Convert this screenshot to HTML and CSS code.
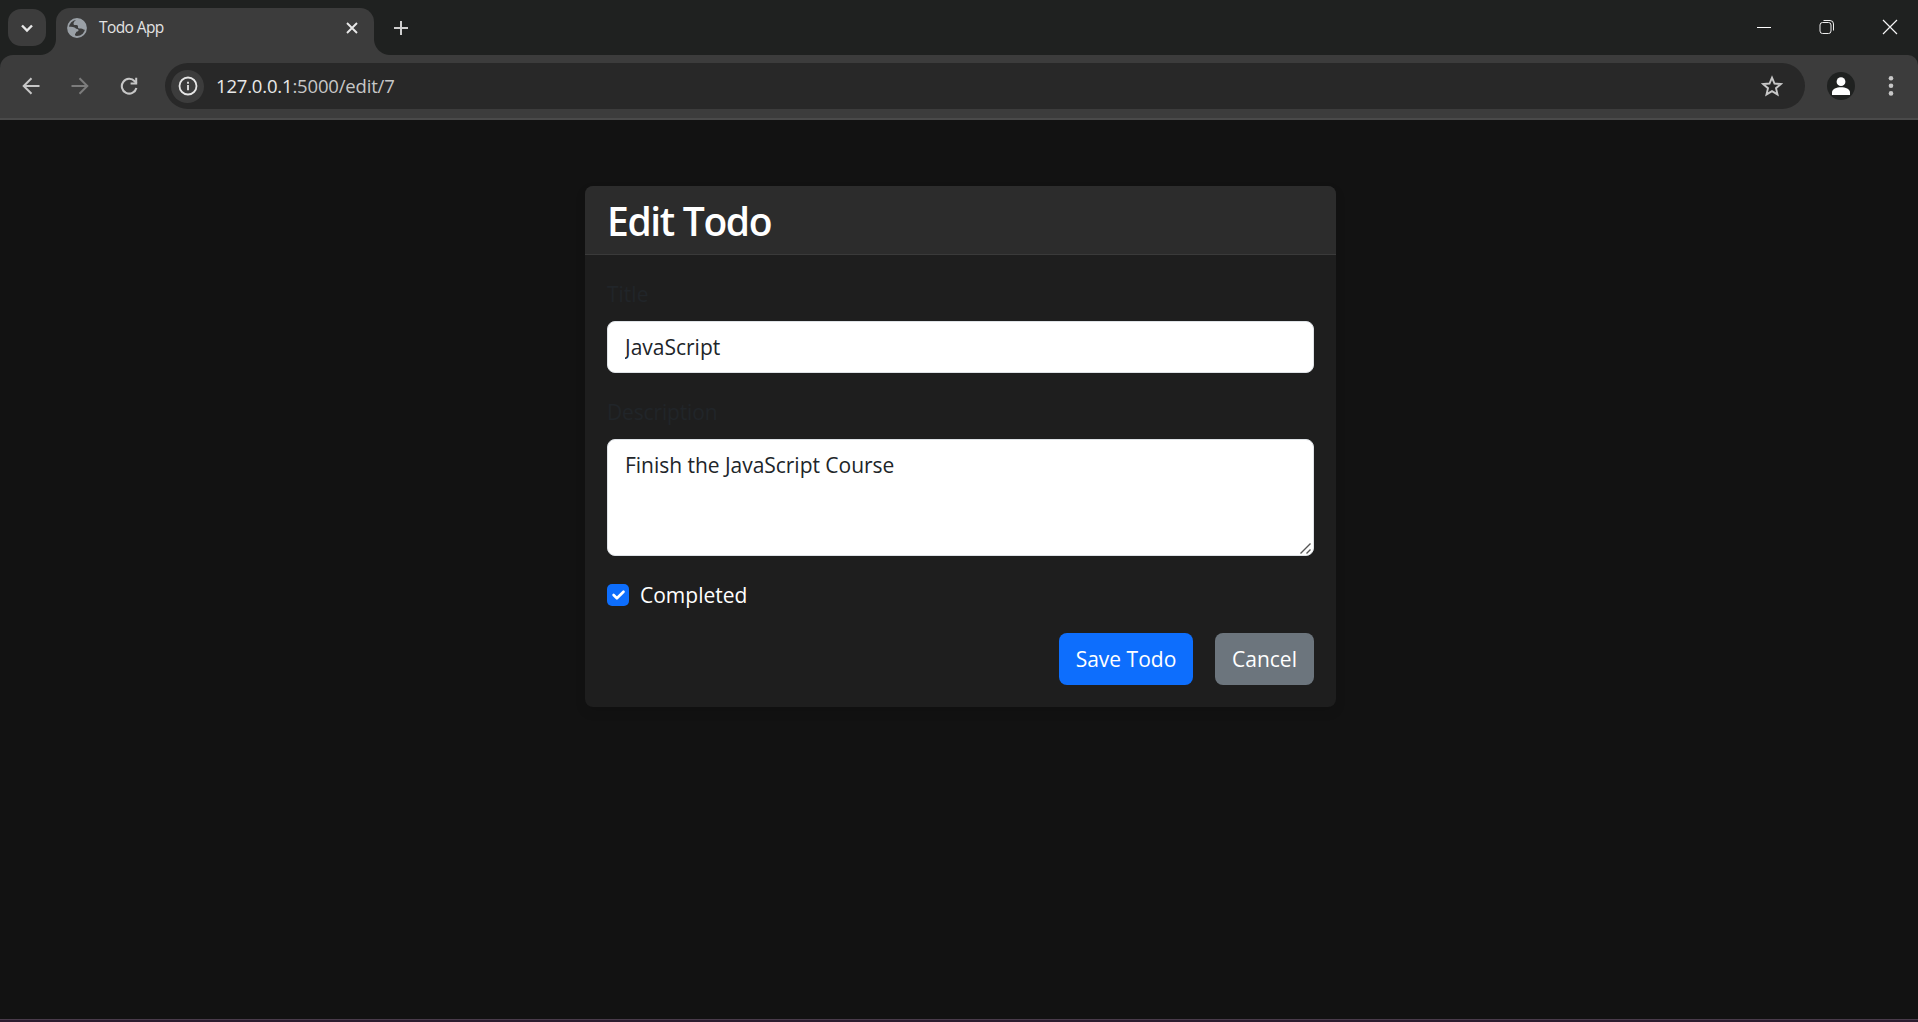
FILE: index.html
```html
<!DOCTYPE html>
<html lang="en">
<head>
<meta charset="utf-8">
<title>Todo App</title>
<link rel="stylesheet" href="styles.css">
</head>
<body>
<header class="browser">
  <div class="tabstrip">
    <div class="tab-search"><svg width="14" height="14" viewBox="0 0 14 14"><path d="M2 4.500l5 5 5-5" fill="none" stroke="#e8e8e8" stroke-width="2.400"/></svg></div>
    <div class="tab">
      <svg class="favicon" width="20" height="20" viewBox="0 0 20 20"><circle cx="10" cy="10" r="9" fill="none" stroke="#9aa0a6" stroke-width="1.800"/><path d="M10.500 1C8.500 2.500 6.500 3.500 6.500 5.500c0 2 1.500 1.500 3 1.500 1.500 0 1.500 1 1.500 2.200 0 1.600 1.500 1.300 3 1.300 2 0 2 1.800 4.800 1C20 6 16 1 10.500 1zM1 9c2.500-.3 5-.3 6.500.5C9 10.200 8.500 11 10.300 11c1.700 0 1.700 2.400 0 2.600C8.800 13.800 9.300 15 8.500 15.500c-1 .6-.5 2 .5 3.300C4 18.500.5 14 1 9z" fill="#9aa0a6"/></svg>
      <span class="tab-title">Todo App</span>
      <svg class="tab-close" width="14" height="14" viewBox="0 0 14 14"><path d="M2 2l10 10M12 2L2 12" stroke="#e8e8e8" stroke-width="1.900"/></svg>
    </div>
    <svg class="new-tab" width="14" height="14" viewBox="0 0 14 14"><path d="M7 0v14M0 7h14" stroke="#cfcfcf" stroke-width="2"/></svg>
    <div class="window-controls">
      <svg width="16" height="16" viewBox="0 0 16 16"><path d="M1 8.500h14" stroke="#fff"/></svg>
      <svg width="16" height="16" viewBox="0 0 16 16" fill="none" stroke="#eee"><rect x="1" y="3.500" width="11" height="11" rx="2.500"/><path d="M4.500 1.500H11a3.500 3.500 0 0 1 3.500 3.500v6.500"/></svg>
      <svg width="16" height="16" viewBox="0 0 16 16"><path d="M1 1l14 14M15 1L1 15" stroke="#f4f4f4" stroke-width="1.200"/></svg>
    </div>
  </div>
  <div class="toolbar">
    <div class="nav-button"><svg width="18" height="18" viewBox="0 0 18 18"><path d="M17.500 9H2M9.500 1.200L1.700 9l7.800 7.800" fill="none" stroke="#c7c7c7" stroke-width="2"/></svg></div>
    <div class="nav-button"><svg width="18" height="18" viewBox="0 0 18 18"><path d="M.5 9H16M8.500 1.200L16.300 9l-7.800 7.800" fill="none" stroke="#7c7c7c" stroke-width="2"/></svg></div>
    <div class="nav-button"><svg width="18" height="18" viewBox="0 0 18 18"><path d="M16.400 11A7.400 7.400 0 1 1 14.700 4.200L16.500 6.500" fill="none" stroke="#c7c7c7" stroke-width="2.100"/><path d="M17.200.8V7.400H10.600V5.400H15.200V.8z" fill="#c7c7c7"/></svg></div>
    <div class="address-bar">
      <div class="site-info"><svg width="20" height="20" viewBox="0 0 20 20"><circle cx="10" cy="10" r="8.500" fill="none" stroke="#e6e6e6" stroke-width="1.800"/><path d="M10 9v5.200M10 5.800v2" stroke="#e6e6e6" stroke-width="1.800"/></svg></div>
      <div class="url"><span class="host">127.0.0.1</span>:5000/edit/7</div>
      <svg class="star" width="22" height="22" viewBox="0 0 22 22"><path d="M11 2.600l2.500 5.900 6.400.5-4.900 4.200 1.500 6.200L11 16.100l-5.500 3.300L7 13.200 2.100 9l6.400-.5z" fill="none" stroke="#c7c7c7" stroke-width="1.900"/></svg>
    </div>
    <svg class="avatar" width="28" height="28" viewBox="0 0 28 28"><circle cx="14" cy="14" r="14" fill="#1f2120"/><circle cx="14" cy="9.700" r="4.400" fill="#fff"/><path d="M5 23v-2.500c0-3.500 4.500-5.300 9-5.300s9 1.800 9 5.300V23z" fill="#fff"/></svg>
    <svg class="menu-dots" width="6" height="22" viewBox="0 0 6 22" fill="#c7c7c7"><circle cx="3" cy="3.200" r="2.300"/><circle cx="3" cy="10.800" r="2.300"/><circle cx="3" cy="18.400" r="2.300"/></svg>
  </div>
</header>
<main class="page">
  <form class="card">
    <div class="card-header"><h1 class="card-title">Edit Todo</h1></div>
    <div class="card-body">
      <label class="form-label" for="title">Title</label>
      <input class="form-control" id="title" type="text" value="JavaScript">
      <label class="form-label label-description" for="description">Description</label>
      <div class="textarea-wrap">
        <textarea class="form-control textarea" id="description">Finish the JavaScript Course</textarea>
        <svg class="grip" width="14" height="14" viewBox="0 0 14 14"><path d="M1.500 12.500L11.500 2.500M7.500 12.500L11.500 8.500" stroke="#555" stroke-width="1.400"/></svg>
      </div>
      <div class="check-row">
        <span class="checkbox"><svg width="22" height="22" viewBox="0 0 20 20"><path d="M6 10l3 3 6-6" fill="none" stroke="#fff" stroke-width="2.400" stroke-linecap="round" stroke-linejoin="round"/></svg></span>
        <span class="check-label">Completed</span>
      </div>
      <div class="actions">
        <button class="button save" type="button">Save Todo</button>
        <button class="button cancel" type="button">Cancel</button>
      </div>
    </div>
  </form>
</main>
<footer class="window-edge"></footer>
</body>
</html>
```
FILE: styles.css
```css
* { box-sizing: border-box; }
body {
  margin: 0;
  height: 1022px;
  display: flex;
  flex-direction: column;
  overflow: hidden;
  background: #121212;
  color: #fff;
  font: 21px/33px "Open Sans", "Noto Sans", sans-serif;
}
svg { display: block; flex: none; }

.browser { background: #1f2120; }
.tabstrip { height: 55px; padding: 8px 0 0 8px; display: flex; align-items: flex-start; }
.tab-search {
  width: 38px; height: 37px; margin-top: 1px;
  border-radius: 13px; background: #3c3c3c;
  display: flex; align-items: center; justify-content: center;
}
.tab {
  position: relative;
  width: 318px; height: 47px; margin-left: 10px; padding: 0 15px 8px 11px;
  border-radius: 14px 14px 0 0; background: #3c3c3c;
  display: flex; align-items: center;
}
.tab::before, .tab::after { content: ""; position: absolute; bottom: 0; width: 16px; height: 16px; }
.tab::before { left: -16px; background: radial-gradient(circle at 0 0, #3c3c3c00 15.500px, #3c3c3c 16.500px); }
.tab::after { right: -16px; background: radial-gradient(circle at 100% 0, #3c3c3c00 15.500px, #3c3c3c 16.500px); }
.tab-title { margin-left: 12px; padding-bottom: 1px; font-size: 15.500px; line-height: 20px; letter-spacing: -0.6px; color: #e3e3e3; }
.tab-close { margin-left: auto; }
.new-tab { margin: 13px 0 0 20px; }
.window-controls { margin: 11px 20px 0 auto; display: flex; gap: 47px; }

.toolbar {
  height: 65px; padding: 0 0 1px 6px;
  border-bottom: 2px solid #4a4a4a; border-radius: 13px 10px 0 0;
  background: #3c3c3c;
  display: flex; align-items: center;
}
.nav-button { width: 49px; display: flex; justify-content: center; }
.address-bar {
  width: 1640px; height: 46px; margin-left: 12px; padding: 0 22px 0 6px;
  border-radius: 23px; background: #282828;
  display: flex; align-items: center;
}
.site-info {
  width: 33px; height: 33px; border-radius: 50%; background: #3c3c3c;
  display: flex; align-items: center; justify-content: center;
}
.url { margin-left: 12px; font-size: 18.500px; line-height: 26px; letter-spacing: -0.18px; color: #c7c7c7; }
.host { color: #e8e8e8; }
.star { margin-left: auto; }
.avatar { margin-left: 22px; }
.menu-dots { margin-left: 33px; }

.page { flex: 1; padding: 66px 0 0 585px; }
.card { width: 751px; height: 521px; border-radius: 8px; background: #1e1e1e; box-shadow: 0 5px 11px #0000001a; }
.card-header { height: 69px; padding: 12px 22px 10px; border-bottom: 1px solid #3a3a3a; border-radius: 8px 8px 0 0; background: #2c2c2c; }
.card-title { margin: 0; font-size: 39px; font-weight: 600; line-height: 46px; letter-spacing: -1.350px; }
.card-body { padding: 22px; }
.form-label { display: block; height: 33px; margin-bottom: 11px; padding-top: 1px; color: #212529; }
.label-description { letter-spacing: -0.150px; }
.form-control {
  display: block; width: 100%; height: 52px; margin-bottom: 22px; padding: 8px 16px 8px 17px;
  border: 1px solid #dee2e6; border-radius: 8px; outline: 0;
  background: #fff; color: #212529; font: inherit;
}
.textarea-wrap { position: relative; margin-bottom: 22px; }
.textarea { height: 117px; margin: 0; padding-top: 9px; resize: none; overflow: hidden; letter-spacing: -0.030px; }
.grip { position: absolute; right: 1px; bottom: 1px; }
.check-row { height: 33px; display: flex; align-items: center; gap: 11px; }
.checkbox { width: 22px; height: 22px; border-radius: 5px; background: #0d6efd; }
.check-label { padding-top: 2px; }
.actions { margin-top: 22px; display: flex; justify-content: flex-end; gap: 22px; }
.button { height: 52px; padding: 0; border: 0; border-radius: 8px; color: #fff; font: inherit; }
.save { width: 134px; background: #0d6efd; }
.cancel { width: 99px; background: #6c757d; }

.window-edge { height: 3px; border-top: 1px solid #493b4b; background: #2b1d2f; }
```
